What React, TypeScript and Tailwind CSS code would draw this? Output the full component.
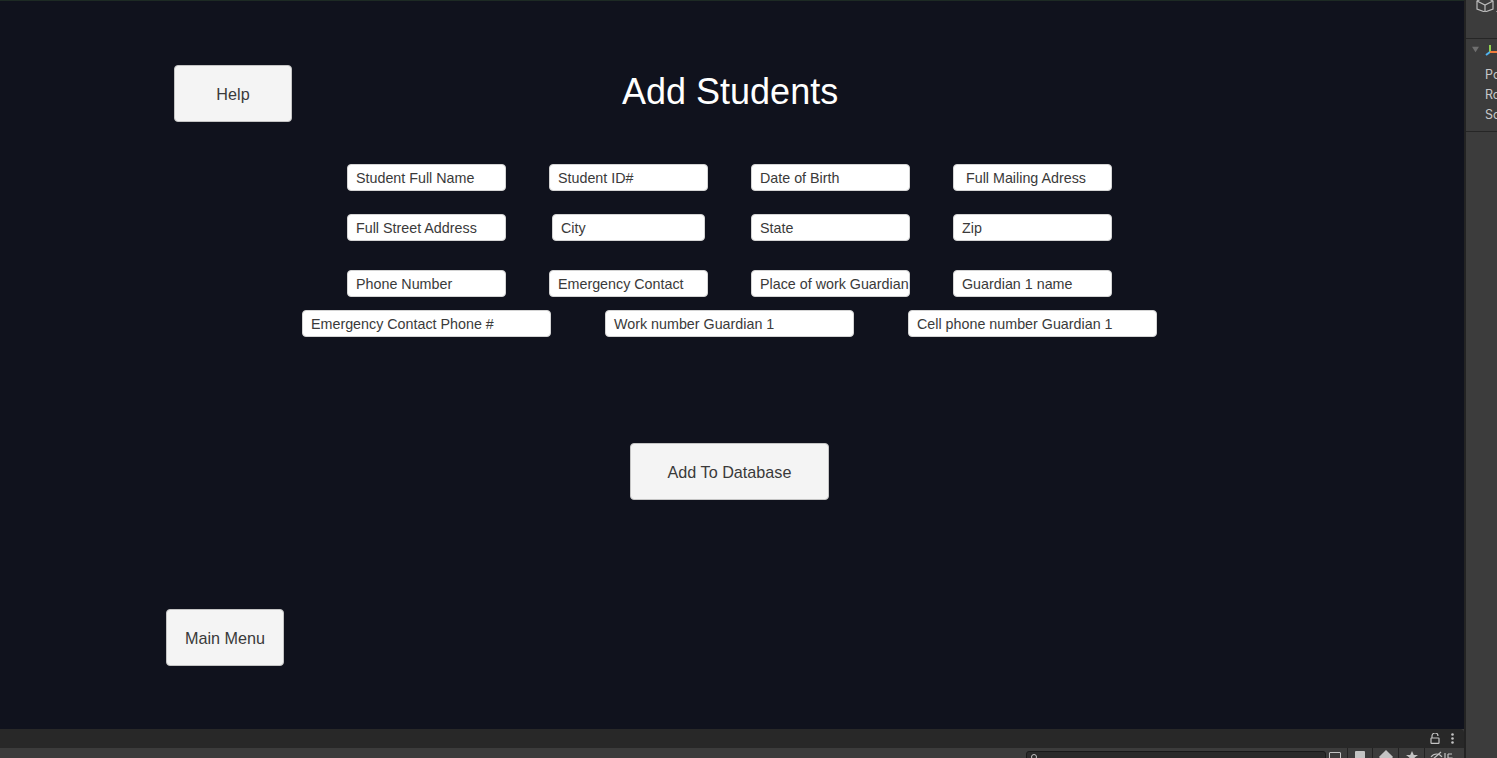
import React from 'react';

const font = { fontFamily: '"Liberation Sans", Arial, sans-serif' };

function Field({ label, className = 'w-[159px]', pad = 'pl-[8px]' }: { label: string; className?: string; pad?: string }) {
  return (
    <div
      className={`h-[27px] ${className} ${pad} pt-[2px] flex items-center shrink-0 overflow-hidden whitespace-nowrap rounded-[4px] border border-[#d4d4d4] bg-white text-[14.3px] text-[#3a3a3a]`}
    >
      {label}
    </div>
  );
}

function UiButton({ label, className }: { label: string; className: string }) {
  return (
    <button
      className={`h-[57px] ${className} pt-[2px] shrink-0 flex items-center justify-center rounded-[4px] border border-[#c4c4c4] bg-[#f4f4f4] text-[16.2px] text-[#3a3a3a]`}
    >
      {label}
    </button>
  );
}

function GameView() {
  return (
    <div className="h-[729px] w-full bg-[#10121d] border-t border-[#1d2a24] flex flex-col" style={font}>
      {/* Header */}
      <div className="flex items-start pl-[174px] mt-[64px]">
        <UiButton label="Help" className="w-[118px]" />
        <h1 className="ml-[330px] mt-[6px] text-[36px] leading-[41px] font-normal text-white whitespace-nowrap">
          Add Students
        </h1>
      </div>

      {/* Fields */}
      <div className="flex gap-[43px] pl-[347px] mt-[42px]">
        <Field label="Student Full Name" />
        <Field label="Student ID#" />
        <Field label="Date of Birth" />
        <Field label="Full Mailing Adress" pad="pl-[12px]" />
      </div>
      <div className="flex gap-[43px] pl-[347px] mt-[23px]">
        <Field label="Full Street Address" />
        <Field label="City" className="w-[153px] mx-[3px]" />
        <Field label="State" />
        <Field label="Zip" />
      </div>
      <div className="flex gap-[43px] pl-[347px] mt-[29px]">
        <Field label="Phone Number" />
        <Field label="Emergency Contact" />
        <Field label="Place of work Guardian" />
        <Field label="Guardian 1 name" />
      </div>
      <div className="flex gap-[54px] pl-[302px] mt-[13px]">
        <Field label="Emergency Contact Phone #" className="w-[249px]" />
        <Field label="Work number Guardian 1" className="w-[249px]" />
        <Field label="Cell phone number Guardian 1" className="w-[249px]" />
      </div>

      {/* Actions */}
      <div className="pl-[630px] mt-[106px]">
        <UiButton label="Add To Database" className="w-[199px]" />
      </div>
      <div className="pl-[166px] mt-[109px]">
        <UiButton label="Main Menu" className="w-[118px]" />
      </div>
    </div>
  );
}

function BottomBars() {
  return (
    <>
      <div className="h-[19px] bg-[#282828] rounded-tr-[4px] flex items-center justify-end pr-[10px] gap-[11px]">
        <svg width="10" height="11" viewBox="0 0 10 11" fill="none" stroke="#c4c4c4" strokeWidth="1.2">
          <path d="M2 5V3a3 3 0 0 1 6 0" />
          <rect x="1" y="5" width="8" height="5.4" rx="0.6" />
        </svg>
        <svg width="3" height="11" viewBox="0 0 3 11" fill="#c4c4c4">
          <circle cx="1.5" cy="1.5" r="1.3" />
          <circle cx="1.5" cy="5.5" r="1.3" />
          <circle cx="1.5" cy="9.5" r="1.3" />
        </svg>
      </div>
      <div className="h-[10px] bg-[#3c3c3c] overflow-hidden flex items-start">
        <div className="ml-[1026px] mt-[3px] h-[20px] w-[300px] rounded-[3px] border border-[#191919] bg-[#2a2a2a] flex items-start pl-[4px] pt-[2px]">
          <div className="w-[6px] h-[6px] rounded-full border border-[#c4c4c4]" />
        </div>
        <div className="ml-[3px] mt-[4px] w-[12px] h-[12px] border border-[#c4c4c4] rounded-[1px]" />
        <div className="ml-[6px] h-full w-px bg-[#232323]" />
        <div className="ml-[7px] mt-[3px] w-[10px] h-[10px] bg-[#c4c4c4] rounded-[1px]" />
        <div className="ml-[7px] h-full w-px bg-[#232323]" />
        <div className="ml-[8px] mt-[4px] w-[10px] h-[10px] bg-[#c4c4c4] rotate-45" />
        <div className="ml-[7px] h-full w-px bg-[#232323]" />
        <svg width="12" height="12" viewBox="0 0 12 12" className="ml-[7px] mt-[3px] shrink-0">
          <path d="M6 0l1.8 4H12L8.6 6.6 10 11 6 8.3 2 11l1.4-4.4L0 4h4.2z" fill="#c4c4c4" />
        </svg>
        <div className="ml-[6px] h-full w-px bg-[#232323]" />
        <svg width="24" height="12" viewBox="0 0 24 12" className="ml-[5px] mt-[2px] shrink-0" fill="none" stroke="#c4c4c4" strokeWidth="1.2">
          <path d="M1 7c3-4 8-4 11 0" />
          <path d="M2 10L11 2" />
          <path d="M15 3v8M18 4h4M18 4v7h4v-3h-4" />
        </svg>
      </div>
    </>
  );
}

function Inspector() {
  return (
    <div className="w-[33px] h-full shrink-0 border-l-2 border-[#232323] bg-[#3c3c3c] flex flex-col overflow-hidden" style={{ fontFamily: 'Inter, "Noto Sans", sans-serif' }}>
      <div className="h-[39px] border-b border-[#262626] flex items-start pl-[8px]">
        <svg width="22" height="16" viewBox="0 0 22 16" fill="none" stroke="#bdbdbd" strokeWidth="1.2" className="-mt-[4px] shrink-0">
          <path d="M11 1 L19 5 L19 13 L11 16 L3 13 L3 5 Z" />
          <path d="M3 5 L11 9 L19 5 M11 9 L11 16" />
        </svg>
        <svg width="6" height="4" viewBox="0 0 6 4" className="mt-[11px] shrink-0">
          <path d="M0 0h6L3 4z" fill="#c4c4c4" />
        </svg>
      </div>
      <div className="h-[21px] flex items-center pl-[6px] gap-[6px]">
        <svg width="9" height="7" viewBox="0 0 9 7">
          <path d="M0 0h9L4.5 7z" fill="#6f6f6f" />
        </svg>
        <svg width="12" height="12" viewBox="0 0 12 12" className="shrink-0">
          <path d="M5 1v7" stroke="#8fd14f" strokeWidth="2" />
          <path d="M5 8L1 11" stroke="#4fb3f0" strokeWidth="2" />
          <path d="M5 8h7" stroke="#f07a3a" strokeWidth="2" />
        </svg>
      </div>
      <div className="flex flex-col pl-[19px] pt-[5px] text-[12.5px] text-[#c8c8c8] whitespace-nowrap">
        <div className="h-[20px] leading-[20px]">Po</div>
        <div className="h-[20px] leading-[20px]">Ro</div>
        <div className="h-[20px] leading-[20px]">Sc</div>
      </div>
      <div className="mt-[6px] border-b border-[#262626]" />
    </div>
  );
}

export default function App() {
  return (
    <div className="w-[1497px] h-[758px] flex overflow-hidden bg-[#3c3c3c]">
      <div className="w-[1464px] h-full flex flex-col shrink-0">
        <GameView />
        <BottomBars />
      </div>
      <Inspector />
    </div>
  );
}
